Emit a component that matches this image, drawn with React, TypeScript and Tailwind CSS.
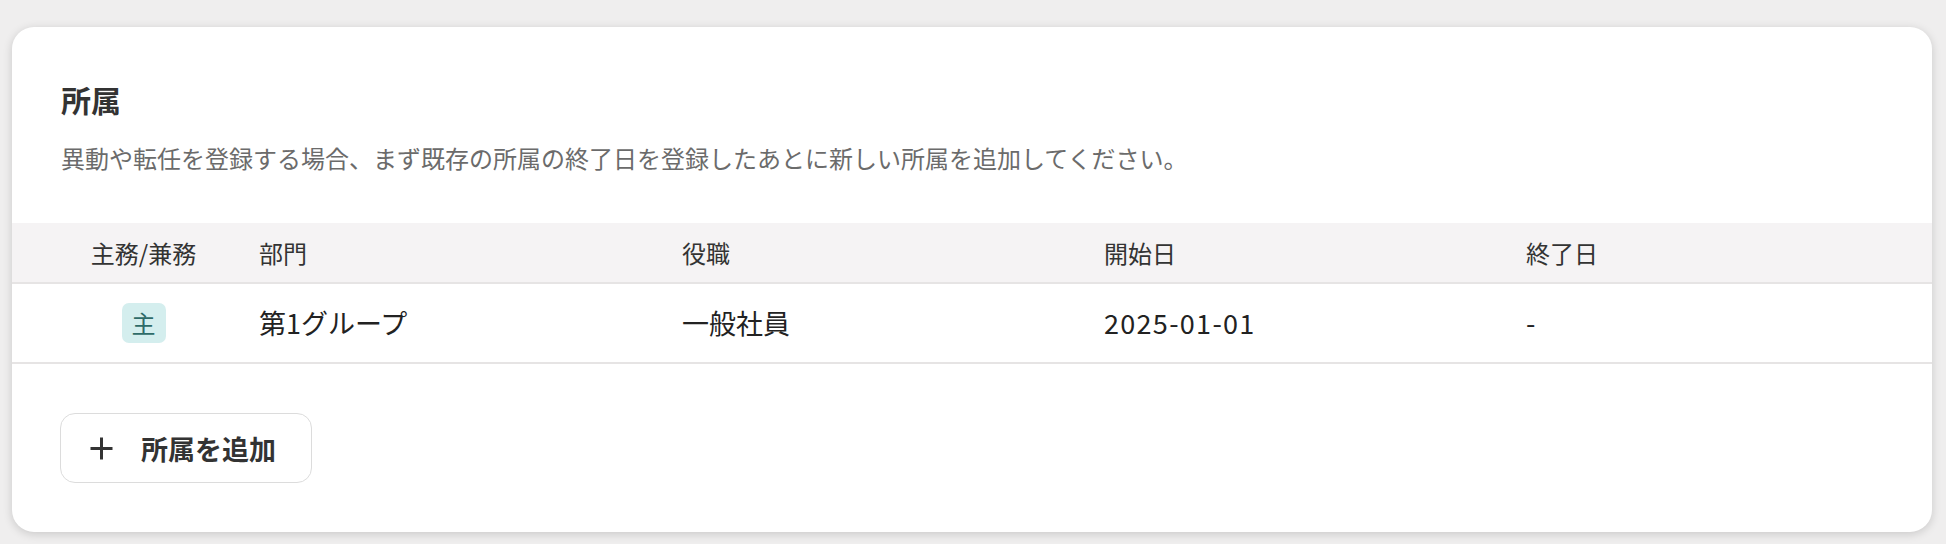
import React from "react";

interface Affiliation {
  isMain: boolean;
  department: string;
  position: string;
  startDate: string;
  endDate: string;
}

const rows: Affiliation[] = [
  {
    isMain: true,
    department: "第1グループ",
    position: "一般社員",
    startDate: "2025-01-01",
    endDate: "-",
  },
];

const gridCols = "grid grid-cols-[247px_423px_422px_422px_1fr]";

const PlusIcon: React.FC = () => (
  <svg width="25" height="25" viewBox="0 0 25 25" fill="none" stroke="#333333" strokeWidth="3">
    <path d="M12.5 1.5v22M1.5 12.5h22" />
  </svg>
);

const App: React.FC = () => {
  return (
    <div className="min-h-[544px] bg-[#efeeee] pt-[27px] pl-[12px] pr-[14px] pb-[12px] font-['Noto_Sans_CJK_JP',sans-serif]">
      <div className="bg-white rounded-[22px] shadow-[0_2px_10px_rgba(0,0,0,0.16)] pt-[50px] pb-[49px] overflow-hidden">
        {/* heading */}
        <div className="px-[49px]">
          <h2 className="text-[30px] leading-[45px] font-bold text-[#333333]">所属</h2>
          <p className="mt-[18px] text-[24px] leading-[36px] text-[#6b6b6b]">
            異動や転任を登録する場合、まず既存の所属の終了日を登録したあとに新しい所属を追加してください。
          </p>
        </div>

        {/* table */}
        <div className="mt-[47px]">
          <div className={`${gridCols} h-[61px] bg-[#f5f3f4] border-b-2 border-[#e6e4e4] items-center text-[24px] text-[#333333]`}>
            <div className="pl-4 text-center">主務/兼務</div>
            <div>部門</div>
            <div>役職</div>
            <div>開始日</div>
            <div>終了日</div>
          </div>
          {rows.map((row, i) => (
            <div
              key={i}
              className={`${gridCols} h-[80px] border-b-2 border-[#e6e4e4] items-center text-[27px] text-[#222222]`}
            >
              <div className="pl-4 flex justify-center">
                <span className="w-[44px] h-[40px] rounded-[7px] bg-[#d4eeee] text-[#2f6b68] text-[24px] flex items-center justify-center">
                  {row.isMain ? "主" : "兼"}
                </span>
              </div>
              <div>{row.department}</div>
              <div>{row.position}</div>
              <div className="tracking-[1.3px]">{row.startDate}</div>
              <div>{row.endDate}</div>
            </div>
          ))}
        </div>

        {/* add button */}
        <div className="px-[48px] mt-[49px]">
          <button className="h-[70px] w-[252px] pl-[28px] flex items-center gap-[27px] rounded-[15px] border-[1.5px] border-[#dcdcdc] bg-white">
            <PlusIcon />
            <span className="text-[27px] font-bold text-[#333333] leading-none">所属を追加</span>
          </button>
        </div>
      </div>
    </div>
  );
};

export default App;
